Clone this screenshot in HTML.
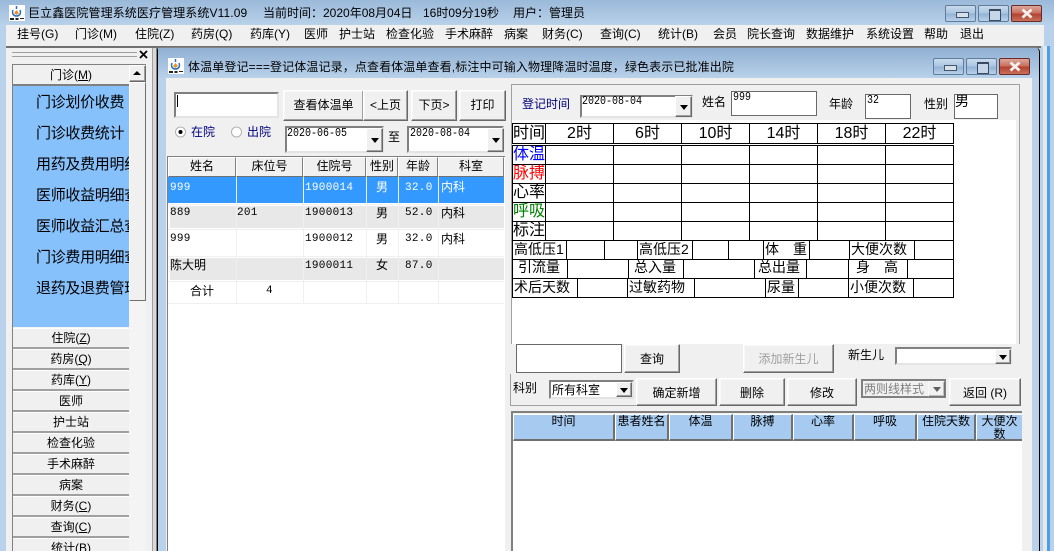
<!DOCTYPE html>
<html><head><meta charset="utf-8"><style>
html,body{margin:0;padding:0;width:1054px;height:551px;overflow:hidden;background:#b9d1ea}
body{position:relative;font-family:"Liberation Sans","WenQuanYi Zen Hei","Noto Sans CJK SC",sans-serif;font-size:12px;color:#000}
div,span.t{position:absolute;box-sizing:border-box}
.t{position:absolute;white-space:nowrap;line-height:14px;height:14px}
.c{text-align:center}
.m{font-family:"Liberation Mono","WenQuanYi Zen Hei",monospace;font-size:10px;transform:scaleY(1.15);transform-origin:0 50%}
.r{font-family:"Liberation Mono","WenQuanYi Zen Hei",monospace;font-size:11px;letter-spacing:.3px}
.n{color:#000080}
.b{background:#f0f0f0;border:1px solid;border-color:#fff #696969 #696969 #fff;box-shadow:inset -1px -1px 0 #a0a0a0,inset 1px 1px 0 #f8f8f8;text-align:center;line-height:28px}
.s{background:#fff;border:2px solid;border-color:#808080 #e4e4e4 #e4e4e4 #808080;outline:0}
.a{background:#f0f0f0;border:1px solid;border-color:#fff #696969 #696969 #fff;box-shadow:inset -1px -1px 0 #a0a0a0}
.a:after{content:"";position:absolute;left:50%;top:50%;margin:-2px 0 0 -4px;border:4px solid transparent;border-top:5px solid #000;border-bottom:0}
.acc{left:13px;width:116px;height:21px;background:#f0f0f0;border-top:1px solid #fff;border-bottom:2px solid #a0a0a0;text-align:center;line-height:18px}
.i{left:36px;font-size:15px;letter-spacing:-.3px;line-height:18px;height:18px;width:93px;overflow:hidden;white-space:nowrap;color:#000}
.w{border:1px solid #5f7c9c;border-radius:2px;background:linear-gradient(#c9daec,#a9c4e2 50%,#92b2d4 52%,#b8d0ea)}
.x{border:1px solid #6b2a24;border-radius:2px;background:linear-gradient(#dba99d,#c86a58 50%,#b0402f 52%,#c9705a)}
.x svg{position:absolute;left:9px;top:2px}
.mn:after{content:"";position:absolute;left:10px;bottom:3px;width:11px;height:4px;background:#d8e0ea;border:1px solid #44566c}
.mx:after{content:"";position:absolute;left:10px;top:3px;width:10px;height:9px;border:1px solid #3a4a60;border-top-width:2px;background:#c5d6e8}
.h{top:157px;height:20px;background:#f0f0f0;border:1px solid;border-color:#fff #808080 #707070 #fff;text-align:center;line-height:17px}
.k{background:#a6caf0;border:1px solid #fff;border-right:2px solid #707070;border-bottom:2px solid #707070;top:414px;height:27px;text-align:center;line-height:13px;overflow:hidden}
</style></head><body>

<!-- outer title -->
<div style="left:0;top:0;width:1054px;height:25px;background:linear-gradient(#9ab8d8,#b9d1ea)"></div>
<svg style="position:absolute;left:9px;top:5px" width="16" height="16" viewBox="0 0 16 16"><rect width="16" height="16" fill="#fff"/><path d="M7.500 1 L7.500 4 M4 5 C2.500 9 5 11 7.500 11 C10 11 12.500 9 11 5" fill="none" stroke="#2a6fc0" stroke-width="1.500"/><path d="M7.500 5 L10 8 L7.500 10 L5 8Z" fill="#e8922a"/><path d="M1 13h4v2H1zM6.500 13h3v2h-3zM11 13h4v1h-4z" fill="#222"/></svg>
<span class="t" style="left:28px;top:6px;letter-spacing:.1px">巨立鑫医院管理系统医疗管理系统V11.09</span>
<span class="t" style="left:263px;top:6px">当前时间：2020年08月04日</span>
<span class="t" style="left:423px;top:6px">16时09分19秒</span>
<span class="t" style="left:513px;top:6px">用户：管理员</span>
<div class="w mn" style="left:945px;top:5px;width:31px;height:17px"></div>
<div class="w mx" style="left:978px;top:5px;width:31px;height:17px"></div>
<div class="x" style="left:1011px;top:5px;width:31px;height:17px"><svg width="12" height="11"><path d="M1.500 1.500L10.500 9.500M10.500 1.500L1.500 9.500" stroke="#f4f0f0" stroke-width="2.800"/></svg></div>

<!-- menu -->
<div style="left:6px;top:25px;width:1038px;height:21px;background:#f0f0f0"></div>
<span class="t" style="left:17px;top:27px">挂号(G)</span>
<span class="t" style="left:75px;top:27px">门诊(M)</span>
<span class="t" style="left:135px;top:27px">住院(Z)</span>
<span class="t" style="left:191px;top:27px">药房(Q)</span>
<span class="t" style="left:250px;top:27px">药库(Y)</span>
<span class="t" style="left:304px;top:27px">医师</span>
<span class="t" style="left:339px;top:27px">护士站</span>
<span class="t" style="left:386px;top:27px">检查化验</span>
<span class="t" style="left:445px;top:27px">手术麻醉</span>
<span class="t" style="left:504px;top:27px">病案</span>
<span class="t" style="left:542px;top:27px">财务(C)</span>
<span class="t" style="left:600px;top:27px">查询(C)</span>
<span class="t" style="left:658px;top:27px">统计(B)</span>
<span class="t" style="left:713px;top:27px">会员</span>
<span class="t" style="left:747px;top:27px">院长查询</span>
<span class="t" style="left:806px;top:27px">数据维护</span>
<span class="t" style="left:866px;top:27px">系统设置</span>
<span class="t" style="left:924px;top:27px">帮助</span>
<span class="t" style="left:960px;top:27px">退出</span>

<!-- frame strips -->
<div style="left:6px;top:46px;width:1035px;height:2px;background:#707070"></div>
<div style="left:1043px;top:46px;width:4px;height:505px;background:#e8e8e8"></div>
<div style="left:1047px;top:46px;width:3px;height:505px;background:#4aa0e8"></div>

<!-- left panel -->
<div style="left:6px;top:48px;width:146px;height:503px;background:#f0f0f0"></div>
<div style="left:152px;top:48px;width:5px;height:503px;background:#d8d8d8;border-left:1px solid #a0a0a0;border-right:1px solid #808080"></div>
<div style="left:12px;top:52px;width:125px;height:5px;border-top:1px solid #a0a0a0;border-bottom:1px solid #a0a0a0"></div>
<svg style="position:absolute;left:139px;top:50px" width="9" height="9"><path d="M1 1L8 8M8 1L1 8" stroke="#000" stroke-width="1.800"/></svg>
<div style="left:12px;top:64px;width:134px;height:487px;background:#f4f4f4;border-top:1px solid #808080;border-left:1px solid #808080"></div>
<div style="left:13px;top:65px;width:116px;height:21px;background:#f0f0f0;border-bottom:2px solid #808080;text-align:center;line-height:20px">门诊(<u>M</u>)</div>
<div class="a" style="left:129px;top:65px;width:17px;height:17px"></div>
<svg style="position:absolute;left:129px;top:65px" width="17" height="17"><rect x="1" y="1" width="14" height="14" fill="#f0f0f0"/><path d="M8 6l-4 4h8z"/></svg>
<div style="left:129px;top:82px;width:17px;height:219px;background:#f0f0f0;border:1px solid;border-color:#fff #707070 #707070 #fff"></div>
<div style="left:13px;top:86px;width:116px;height:241px;background:#87c1fb"></div>
<div class="i" style="top:94px">门诊划价收费</div>
<div class="i" style="top:125px">门诊收费统计</div>
<div class="i" style="top:156px">用药及费用明细</div>
<div class="i" style="top:187px">医师收益明细查</div>
<div class="i" style="top:218px">医师收益汇总查</div>
<div class="i" style="top:249px">门诊费用明细查</div>
<div class="i" style="top:280px">退药及退费管理</div>
<div class="acc" style="top:328px">住院(<u>Z</u>)</div>
<div class="acc" style="top:349px">药房(<u>Q</u>)</div>
<div class="acc" style="top:370px">药库(<u>Y</u>)</div>
<div class="acc" style="top:391px">医师</div>
<div class="acc" style="top:412px">护士站</div>
<div class="acc" style="top:433px">检查化验</div>
<div class="acc" style="top:454px">手术麻醉</div>
<div class="acc" style="top:475px">病案</div>
<div class="acc" style="top:496px">财务(<u>C</u>)</div>
<div class="acc" style="top:517px">查询(<u>C</u>)</div>
<div class="acc" style="top:538px">统计(<u>B</u>)</div>

<!-- child window -->
<div style="left:157px;top:47px;width:883px;height:504px;background:#b9d1ea;border-left:1px solid #000;border-right:1px solid #000;border-top:1px solid #808080;border-top-right-radius:5px;border-top-left-radius:3px"></div>
<div style="left:158px;top:48px;width:881px;height:30px;background:linear-gradient(#90b0d2,#b9d1ea);border-top-right-radius:5px"></div>
<svg style="position:absolute;left:168px;top:58px" width="16" height="16" viewBox="0 0 16 16"><rect width="16" height="16" fill="#fff"/><path d="M7.500 1 L7.500 4 M4 5 C2.500 9 5 11 7.500 11 C10 11 12.500 9 11 5" fill="none" stroke="#2a6fc0" stroke-width="1.500"/><path d="M7.500 5 L10 8 L7.500 10 L5 8Z" fill="#e8922a"/><path d="M1 13h4v2H1zM6.500 13h3v2h-3zM11 13h4v1h-4z" fill="#222"/></svg>
<span class="t" style="left:188px;top:60px;letter-spacing:.12px">体温单登记===登记体温记录，点查看体温单查看,标注中可输入物理降温时温度，绿色表示已批准出院</span>
<div class="w mn" style="left:933px;top:58px;width:31px;height:17px"></div>
<div class="w mx" style="left:966px;top:58px;width:31px;height:17px"></div>
<div class="x" style="left:999px;top:58px;width:31px;height:17px"><svg width="12" height="11"><path d="M1.500 1.500L10.500 9.500M10.500 1.500L1.500 9.500" stroke="#f4f0f0" stroke-width="2.800"/></svg></div>
<div style="left:166px;top:78px;width:866px;height:473px;background:#f0f0f0"></div>

<!-- left form -->
<div class="s" style="left:174px;top:92px;width:105px;height:26px"></div>
<div style="left:177px;top:95px;width:1px;height:12px;background:#000"></div>
<div class="b" style="left:283px;top:90px;width:81px;height:31px">查看体温单</div>
<div class="b" style="left:363px;top:90px;width:45px;height:31px">&lt;上页</div>
<div class="b" style="left:411px;top:90px;width:46px;height:31px">下页&gt;</div>
<div class="b" style="left:459px;top:90px;width:47px;height:31px">打印</div>
<svg style="position:absolute;left:174px;top:125px" width="110" height="14"><circle cx="6.500" cy="7" r="5" fill="#fff" stroke="#b0b0b0"/><circle cx="6.500" cy="7" r="2" fill="#000"/><circle cx="62.500" cy="7" r="5" fill="#fff" stroke="#b0b0b0"/></svg>
<span class="t n" style="left:191px;top:125px">在院</span>
<span class="t n" style="left:247px;top:125px">出院</span>
<div class="s" style="left:285px;top:126px;width:99px;height:27px"></div>
<span class="t m" style="left:287px;top:128px">2020-06-05</span>
<div class="a" style="left:366px;top:128px;width:17px;height:24px"></div>
<span class="t" style="left:388px;top:130px">至</span>
<div class="s" style="left:407px;top:126px;width:97px;height:27px"></div>
<span class="t m" style="left:410px;top:128px">2020-08-04</span>
<div class="a" style="left:487px;top:128px;width:17px;height:24px"></div>

<!-- left list -->
<div style="left:167px;top:156px;width:338px;height:395px;background:#fff;border-top:1px solid #808080;border-left:1px solid #808080"></div>
<div class="h" style="left:168px;width:68px">姓名</div>
<div class="h" style="left:236px;width:67px">床位号</div>
<div class="h" style="left:303px;width:63px">住院号</div>
<div class="h" style="left:366px;width:32px">性别</div>
<div class="h" style="left:398px;width:40px">年龄</div>
<div class="h" style="left:438px;width:66px">科室</div>
<div style="left:168px;top:177px;width:336px;height:26px;background:#3399ff"></div>
<div style="left:170px;top:206px;width:334px;height:22px;background:#e8e8e8"></div>
<div style="left:170px;top:258px;width:334px;height:22px;background:#e8e8e8"></div>
<svg style="position:absolute;left:168px;top:177px" width="337" height="127" shape-rendering="crispEdges"><g stroke="#f0f0f0" stroke-width="1"><path d="M68.500 0V126M135.500 0V126M198.500 0V126M230.500 0V126M270.500 0V126M0 27.500H336M0 52.500H336M0 79.500H336M0 104.500H336M0 126.500H336"/></g></svg>
<span class="t r" style="left:170px;top:181px;color:#fff">999</span><span class="t r" style="left:305px;top:181px;color:#fff">1900014</span><span class="t" style="left:376px;top:180px;color:#fff">男</span><span class="t r" style="left:405px;top:181px;color:#fff">32.0</span><span class="t" style="left:441px;top:180px;color:#fff">内科</span>
<span class="t r" style="left:170px;top:206px">889</span><span class="t r" style="left:237px;top:206px">201</span><span class="t r" style="left:305px;top:206px">1900013</span><span class="t" style="left:376px;top:206px">男</span><span class="t r" style="left:405px;top:206px">52.0</span><span class="t" style="left:441px;top:206px">内科</span>
<span class="t r" style="left:170px;top:232px">999</span><span class="t r" style="left:305px;top:232px">1900012</span><span class="t" style="left:376px;top:232px">男</span><span class="t r" style="left:405px;top:232px">32.0</span><span class="t" style="left:441px;top:232px">内科</span>
<span class="t" style="left:170px;top:258px">陈大明</span><span class="t r" style="left:305px;top:259px">1900011</span><span class="t" style="left:376px;top:258px">女</span><span class="t r" style="left:405px;top:259px">87.0</span>
<span class="t" style="left:190px;top:284px">合计</span><span class="t r" style="left:266px;top:284px">4</span>

<!-- right panel -->
<div style="left:511px;top:84px;width:509px;height:260px;border:1px solid #a0a0a0;border-bottom:0"></div>
<span class="t n" style="left:522px;top:97px">登记时间</span>
<div class="s" style="left:580px;top:95px;width:113px;height:23px"></div>
<span class="t m" style="left:582px;top:96px">2020-08-04</span>
<div class="a" style="left:675px;top:96px;width:17px;height:21px"></div>
<span class="t" style="left:702px;top:95px">姓名</span>
<div style="left:731px;top:91px;width:86px;height:25px;background:#fff;border:1px solid #696969"></div>
<span class="t m" style="left:733px;top:92px">999</span>
<span class="t" style="left:829px;top:97px">年龄</span>
<div style="left:865px;top:94px;width:46px;height:25px;background:#fff;border:1px solid #696969"></div>
<span class="t m" style="left:867px;top:95px">32</span>
<span class="t" style="left:924px;top:97px">性别</span>
<div style="left:954px;top:94px;width:44px;height:25px;background:#fff;border:1px solid #696969"></div>
<span class="t" style="left:955px;top:94px;font-size:14px">男</span>
<div style="left:512px;top:120px;width:504px;height:224px;background:#fff"></div>

<svg style="position:absolute;left:0;top:0" width="1054" height="551" shape-rendering="crispEdges">
<g fill="none" stroke="#000" stroke-width="1">
<rect x="512.500" y="123.500" width="441" height="20"/>
<rect x="512.500" y="145.500" width="441" height="152"/>
<path d="M545.500 123V144M613.500 123V144M681.500 123V144M749.500 123V144M817.500 123V144M885.500 123V144"/>
<path d="M545.500 145V240M613.500 145V240M681.500 145V240M749.500 145V240M817.500 145V240M885.500 145V240"/>
<path d="M512 164.500H954M512 183.500H954M512 202.500H954M512 221.500H954M512 240.500H954M512 259.500H954M512 278.500H954"/>
<path d="M566.500 240V259M604.500 240V259M637.500 240V259M692.500 240V259M728.500 240V259M763.500 240V259M809.500 240V259M849.500 240V259M914.500 240V259"/>
<path d="M567.500 259V278M628.500 259V278M683.500 259V278M754.500 259V278M806.500 259V278M848.500 259V278M907.500 259V278"/>
<path d="M577.500 278V297M627.500 278V297M694.500 278V297M765.500 278V297M798.500 278V297M848.500 278V297M913.500 278V297"/>
</g></svg>
<span class="t" style="left:513px;top:127px;font-size:16px">时间</span>
<span class="t c" style="left:546px;top:127px;width:67px;font-size:16px">2时</span>
<span class="t c" style="left:614px;top:127px;width:67px;font-size:16px">6时</span>
<span class="t c" style="left:682px;top:127px;width:67px;font-size:16px">10时</span>
<span class="t c" style="left:750px;top:127px;width:67px;font-size:16px">14时</span>
<span class="t c" style="left:818px;top:127px;width:67px;font-size:16px">18时</span>
<span class="t c" style="left:886px;top:127px;width:67px;font-size:16px">22时</span>
<span class="t" style="left:513px;top:148px;font-size:16px;color:#0000ff">体温</span>
<span class="t" style="left:513px;top:167px;font-size:16px;color:#ff0000">脉搏</span>
<span class="t" style="left:513px;top:186px;font-size:16px">心率</span>
<span class="t" style="left:513px;top:205px;font-size:16px;color:#008000">呼吸</span>
<span class="t" style="left:513px;top:224px;font-size:16px">标注</span>
<span class="t" style="left:514px;top:242px;font-size:14px">高低压1</span>
<span class="t" style="left:639px;top:242px;font-size:14px">高低压2</span>
<span class="t" style="left:765px;top:242px;font-size:14px">体　重</span>
<span class="t" style="left:851px;top:242px;font-size:14px">大便次数</span>
<span class="t" style="left:518px;top:260px;font-size:14px">引流量</span>
<span class="t" style="left:634px;top:260px;font-size:14px">总入量</span>
<span class="t" style="left:758px;top:260px;font-size:14px">总出量</span>
<span class="t" style="left:856px;top:260px;font-size:14px">身　高</span>
<span class="t" style="left:514px;top:280px;font-size:14px">术后天数</span>
<span class="t" style="left:629px;top:280px;font-size:14px">过敏药物</span>
<span class="t" style="left:767px;top:280px;font-size:14px">尿量</span>
<span class="t" style="left:850px;top:280px;font-size:14px">小便次数</span>

<!-- lower controls -->
<div style="left:516px;top:344px;width:106px;height:29px;background:#fff;border:1px solid #696969"></div>
<div class="b" style="left:624px;top:344px;width:56px;height:29px">查询</div>
<div class="b" style="left:743px;top:344px;width:91px;height:29px;color:#a0a0a0">添加新生儿</div>
<span class="t" style="left:848px;top:348px">新生儿</span>
<div class="s" style="left:895px;top:347px;width:117px;height:18px"></div>
<div class="a" style="left:995px;top:349px;width:16px;height:15px"></div>
<div style="left:510px;top:374px;width:3px;height:32px;border-left:1px solid #a0a0a0"></div>
<div style="left:511px;top:405px;width:125px;height:1px;background:#a0a0a0"></div>
<span class="t" style="left:513px;top:381px">科别</span>
<div class="s" style="left:549px;top:380px;width:85px;height:19px"></div>
<span class="t" style="left:552px;top:383px">所有科室</span>
<div class="a" style="left:616px;top:382px;width:16px;height:15px"></div>
<div class="b" style="left:636px;top:378px;width:81px;height:28px">确定新增</div>
<div class="b" style="left:719px;top:378px;width:66px;height:28px">删除</div>
<div class="b" style="left:787px;top:378px;width:70px;height:28px">修改</div>
<div style="left:861px;top:379px;width:85px;height:19px;background:#f0f0f0;border:2px solid #808080"></div>
<span class="t" style="left:864px;top:382px;color:#808080">两则线样式</span>
<div class="a" style="left:928px;top:381px;width:17px;height:16px;opacity:.6"></div>
<div class="b" style="left:949px;top:378px;width:72px;height:28px">返回 (R)</div>

<!-- bottom grid -->
<div style="left:511px;top:411px;width:511px;height:140px;background:#fff;border-top:2px solid #808080;border-left:2px solid #808080"></div>
<div style="left:513px;top:413px;width:509px;height:1px;background:#f0f0f0"></div>
<div class="k" style="left:513px;width:102px">时间</div>
<div class="k" style="left:615px;width:54px">患者姓名</div>
<div class="k" style="left:669px;width:64px">体温</div>
<div class="k" style="left:733px;width:60px">脉搏</div>
<div class="k" style="left:793px;width:61px">心率</div>
<div class="k" style="left:854px;width:63px">呼吸</div>
<div class="k" style="left:917px;width:59px">住院天数</div>
<div class="k" style="left:976px;width:46px;border-right:0;font-size:12px">大便次数</div>

</body></html>
